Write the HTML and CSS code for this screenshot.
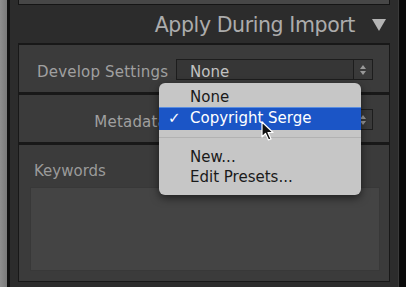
FILE: index.html
```html
<!DOCTYPE html>
<html lang="en">
  <head>
    <meta charset="UTF-8" />
    <title>Apply During Import</title>
    <link rel="stylesheet" href="styles.css">
  </head>
  <body>
    <div class="edge"></div>
    <div class="frame">
      <div class="top-box"></div>
      <div class="header">
        <span class="title">Apply During Import</span>
        <svg class="triangle" width="14" height="12" viewBox="0 0 14 12">
          <path d="M0 0 H14 L7 12 Z" fill="#b4b4b4" />
        </svg>
      </div>

      <div class="section row">
        <span class="label">Develop Settings</span>
        <div class="select">
          <span class="value">None</span>
          <span class="stepper">
            <svg width="8" height="12" viewBox="0 0 8 12">
              <path d="M1 5 L4 1 L7 5 Z M1 7 L4 11 L7 7 Z" fill="#999" />
            </svg>
          </span>
        </div>
      </div>

      <div class="section row second">
        <span class="label">Metadata</span>
        <div class="select">
          <span class="value"></span>
          <span class="stepper">
            <svg width="8" height="12" viewBox="0 0 8 12">
              <path d="M1 5 L4 1 L7 5 Z M1 7 L4 11 L7 7 Z" fill="#999" />
            </svg>
          </span>
        </div>
      </div>

      <div class="section keywords">
        <span class="kw-label">Keywords</span>
        <div class="kw-box"></div>
      </div>
    </div>
    <div class="dark-edge"></div>

    <div class="menu">
      <div class="item">None</div>
      <div class="item selected"><span class="check">✓</span>Copyright Serge</div>
      <div class="sep"></div>
      <div class="item">New...</div>
      <div class="item">Edit Presets...</div>
    </div>

    <svg class="cursor" width="14" height="21" viewBox="0 0 14 21">
      <path d="M1 1 V16 L4.5 12.5 L7.5 19 L10 18 L7 11.5 H12 Z"
        fill="#111" stroke="#fff" stroke-width="1.2" stroke-linejoin="round" />
    </svg>
  </body>
</html>
```

FILE: styles.css
```css
body {
  margin: 0;
  width: 406px;
  height: 287px;
  overflow: hidden;
  display: flex;
  position: relative;
  background: #2d2d2d;
  font-family: "DejaVu Sans", "Open Sans", sans-serif;
}
.edge {
  width: 7px;
  background: linear-gradient(to right, #8e8e8e, #7a7a7a);
}
.frame {
  flex: 1;
  display: flex;
  flex-direction: column;
  background: #2c2c2c;
  border-left: 3px solid #111;
  border-right: 1px solid #3a3a3a;
  padding: 0 8px;
}
.dark-edge {
  width: 7px;
  background: #0a0a0a;
}
.top-box {
  height: 4px;
  background: #474747;
  border: 1px solid #151515;
  border-top: none;
}
.header {
  height: 38px;
  display: flex;
  align-items: center;
  justify-content: flex-end;
  gap: 17px;
  padding-right: 4px;
}
.title {
  color: #acacac;
  font-size: 20.5px;
  letter-spacing: -0.4px;
  margin-top: 2px;
}
.triangle {
  margin-top: 2px;
}
.section {
  background: #3b3b3b;
  border: 1px solid #181818;
  border-top-width: 2px;
}
.row {
  height: 47px;
  display: flex;
  align-items: center;
  gap: 9px;
  padding-left: 18px;
}
.row .label {
  width: 130px;
  text-align: right;
  color: #a0a0a0;
  font-size: 15px;
  letter-spacing: 0.2px;
  white-space: nowrap;
  margin-top: 6px;
}
.row.second {
  border-top-width: 2px;
  height: 47px;
}
.select {
  display: flex;
  height: 21px;
  margin-top: 2px;
}
.value {
  width: 163px;
  border: 1px solid #1d1d1d;
  background: #363636;
  color: #c2c2c2;
  font-size: 15px;
  line-height: 24px;
  padding-left: 13px;
}
.stepper {
  width: 18px;
  border: 1px solid #1d1d1d;
  border-left: none;
  background: #3a3a3a;
  display: flex;
  align-items: center;
  justify-content: center;
}
.keywords {
  flex: 1;
  margin-bottom: 5px;
  padding: 17px 9px 10px 11px;
  display: flex;
  flex-direction: column;
}
.kw-label {
  color: #9a9a9a;
  font-size: 15px;
  padding-left: 4px;
  height: 25px;
}
.kw-box {
  flex: 1;
  background: #444;
  border: 1px solid #383838;
}
.menu {
  position: absolute;
  left: 159px;
  top: 83px;
  width: 202px;
  padding: 4px 0 8px;
  background: #c6c6c6;
  border-radius: 6px;
  box-shadow: 0 3px 8px rgba(0, 0, 0, 0.55);
  font-size: 15px;
  color: #1a1a1a;
}
.item {
  height: 20px;
  line-height: 20px;
  padding-left: 31px;
  position: relative;
}
.item.selected {
  height: 22px;
  line-height: 21px;
  background: #1b55c6;
  border-top: 1px solid #5a8ee0;
  color: #fff;
}
.check {
  position: absolute;
  left: 9px;
}
.sep {
  height: 1px;
  background: #b2b2b2;
  margin: 7px 0 9px;
}
.cursor {
  position: absolute;
  left: 261px;
  top: 121px;
}
```
